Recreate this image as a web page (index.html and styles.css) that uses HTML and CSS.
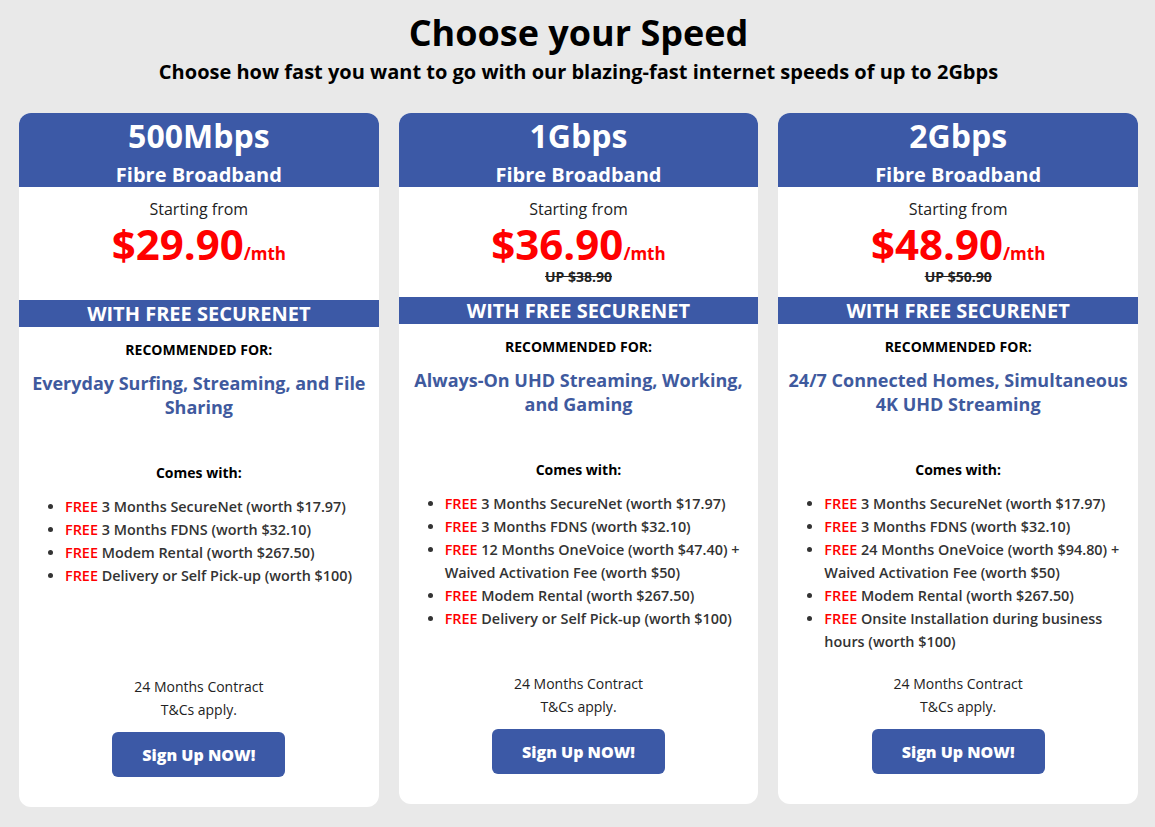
FILE: index.html
```html
<!DOCTYPE html>
<html lang="en">

<head>
  <meta charset="UTF-8">
  <meta name="viewport" content="width=device-width, initial-scale=1.0">
  <title>Choose your Speed</title>
  <link rel="stylesheet" href="styles.css">
</head>

<body>
  <section class="plans">
    <h1 class="plans-title">Choose your Speed</h1>
    <p class="plans-sub">Choose how fast you want to go with our blazing-fast internet speeds of up to 2Gbps</p>

    <div class="plan-grid">
      <!-- 500Mbps -->
      <article class="plan">
        <header class="plan-head">
          <h2 class="plan-speed">500Mbps</h2>
          <h3 class="plan-type">Fibre Broadband</h3>
        </header>
        <div class="plan-price">
          <p class="from">Starting from</p>
          <p class="amount">$29.90<span class="per">/mth</span></p>
          <p class="was was-empty"></p>
        </div>
        <div class="plan-bar">WITH FREE SECURENET</div>
        <div class="plan-rec">
          <p class="rec-label">RECOMMENDED FOR:</p>
          <p class="rec-text">Everyday Surfing, Streaming, and File Sharing</p>
        </div>
        <div class="plan-features">
          <p class="comes">Comes with:</p>
          <ul>
            <li><span class="free">FREE</span> 3 Months SecureNet (worth $17.97)</li>
            <li><span class="free">FREE</span> 3 Months FDNS (worth $32.10)</li>
            <li><span class="free">FREE</span> Modem Rental (worth $267.50)</li>
            <li><span class="free">FREE</span> Delivery or Self Pick-up (worth $100)</li>
          </ul>
        </div>
        <footer class="plan-foot">
          <p>24 Months Contract</p>
          <p>T&amp;Cs apply.</p>
          <button class="signup" type="button">Sign Up NOW!</button>
        </footer>
      </article>

      <!-- 1Gbps -->
      <article class="plan">
        <header class="plan-head">
          <h2 class="plan-speed">1Gbps</h2>
          <h3 class="plan-type">Fibre Broadband</h3>
        </header>
        <div class="plan-price">
          <p class="from">Starting from</p>
          <p class="amount">$36.90<span class="per">/mth</span></p>
          <p class="was">UP $38.90</p>
        </div>
        <div class="plan-bar">WITH FREE SECURENET</div>
        <div class="plan-rec">
          <p class="rec-label">RECOMMENDED FOR:</p>
          <p class="rec-text">Always-On UHD Streaming, Working, and Gaming</p>
        </div>
        <div class="plan-features">
          <p class="comes">Comes with:</p>
          <ul>
            <li><span class="free">FREE</span> 3 Months SecureNet (worth $17.97)</li>
            <li><span class="free">FREE</span> 3 Months FDNS (worth $32.10)</li>
            <li><span class="free">FREE</span> 12 Months OneVoice (worth $47.40) + Waived Activation Fee (worth $50)</li>
            <li><span class="free">FREE</span> Modem Rental (worth $267.50)</li>
            <li><span class="free">FREE</span> Delivery or Self Pick-up (worth $100)</li>
          </ul>
        </div>
        <footer class="plan-foot">
          <p>24 Months Contract</p>
          <p>T&amp;Cs apply.</p>
          <button class="signup" type="button">Sign Up NOW!</button>
        </footer>
      </article>

      <!-- 2Gbps -->
      <article class="plan">
        <header class="plan-head">
          <h2 class="plan-speed">2Gbps</h2>
          <h3 class="plan-type">Fibre Broadband</h3>
        </header>
        <div class="plan-price">
          <p class="from">Starting from</p>
          <p class="amount">$48.90<span class="per">/mth</span></p>
          <p class="was">UP $50.90</p>
        </div>
        <div class="plan-bar">WITH FREE SECURENET</div>
        <div class="plan-rec">
          <p class="rec-label">RECOMMENDED FOR:</p>
          <p class="rec-text">24/7 Connected Homes, Simultaneous 4K UHD Streaming</p>
        </div>
        <div class="plan-features">
          <p class="comes">Comes with:</p>
          <ul>
            <li><span class="free">FREE</span> 3 Months SecureNet (worth $17.97)</li>
            <li><span class="free">FREE</span> 3 Months FDNS (worth $32.10)</li>
            <li><span class="free">FREE</span> 24 Months OneVoice (worth $94.80) + Waived Activation Fee (worth $50)</li>
            <li><span class="free">FREE</span> Modem Rental (worth $267.50)</li>
            <li><span class="free">FREE</span> Onsite Installation during business hours (worth $100)</li>
          </ul>
        </div>
        <footer class="plan-foot">
          <p>24 Months Contract</p>
          <p>T&amp;Cs apply.</p>
          <button class="signup" type="button">Sign Up NOW!</button>
        </footer>
      </article>
    </div>
  </section>
</body>

</html>
```

FILE: styles.css
```css
body {
  margin: 0;
  background: #e9e9e9;
  font-family: "Open Sans", "Noto Sans", sans-serif;
  color: #000;
}

p {
  margin: 0;
}

.plans {
  padding: 9px 17px 20px 19px;
  text-align: center;
}

.plans-title {
  margin: 0;
  font-size: 36px;
  line-height: 48px;
  font-weight: 700;
}

.plans-sub {
  margin-top: 2px;
  font-size: 20px;
  line-height: 26px;
  font-weight: 700;
}

.plan-grid {
  display: grid;
  grid-template-columns: repeat(3, 1fr);
  gap: 20px;
  align-items: start;
  margin-top: 28px;
}

.plan {
  background: #fff;
  border-radius: 12px;
  overflow: hidden;
  padding-bottom: 30px;
}

.plan-head {
  background: #3c59a6;
  color: #fff;
  padding: 3px 0 1px;
}

.plan-speed {
  margin: 0;
  font-size: 32px;
  line-height: 40px;
  font-weight: 700;
}

.plan-type {
  margin: 8px 0 0;
  font-size: 20px;
  line-height: 22px;
  font-weight: 700;
}

.plan-price {
  padding: 11px 0;
}

.from {
  font-size: 16px;
  line-height: 22px;
  color: #222;
}

.amount {
  font-size: 42px;
  line-height: 48px;
  font-weight: 700;
  color: #f00;
}

.per {
  font-size: 17px;
  line-height: 1;
}

.was {
  font-size: 14px;
  line-height: 18px;
  font-weight: 700;
  color: #222;
  text-decoration: line-through;
}

.was-empty {
  height: 21px;
}

.plan-bar {
  background: #3c59a6;
  color: #fff;
  font-size: 20px;
  line-height: 27px;
  font-weight: 700;
}

.plan-rec {
  height: 111px;
  padding: 13px 8px 0;
}

.rec-label {
  font-size: 14px;
  line-height: 20px;
  font-weight: 700;
}

.rec-text {
  margin-top: 11px;
  font-size: 18px;
  line-height: 24px;
  font-weight: 700;
  color: #3f5a9e;
}

.plan-features {
  height: 201px;
  padding-top: 12px;
}

.comes {
  font-size: 14px;
  line-height: 20px;
  font-weight: 700;
}

.plan-features ul {
  margin: 12px 0 0;
  padding: 0 8px 0 46px;
  text-align: left;
  font-size: 14.4px;
  line-height: 23px;
  font-weight: 600;
  color: #333;
}

.free {
  color: #f00;
}

.plan-foot {
  padding-top: 11px;
  font-size: 14px;
  line-height: 23px;
  color: #222;
}

.signup {
  margin-top: 11px;
  width: 173px;
  height: 45px;
  border: 0;
  border-radius: 6px;
  background: #3c59a6;
  color: #fff;
  font-family: inherit;
  font-size: 16px;
  font-weight: 800;
  cursor: pointer;
}
```
